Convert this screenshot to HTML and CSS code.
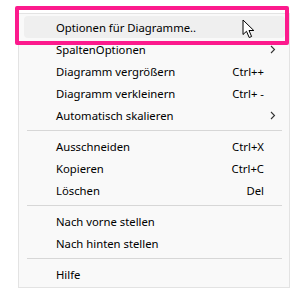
FILE: index.html
```html
<!DOCTYPE html>
<html lang="de">
<head>
<meta charset="UTF-8" />
<title>Kontextmenü</title>
<link rel="stylesheet" href="styles.css">
</head>
<body>
  <div class="menu">
    <div class="item hover"><span class="label">Optionen für Diagramme..</span><span class="key"></span><span class="sub"></span></div>
    <div class="item"><span class="label">SpaltenOptionen</span><span class="key"></span><span class="sub"><svg width="6" height="9" viewBox="0 0 6 9"><path d="M1 1 L4.5 4.5 L1 8" fill="none" stroke="#333" stroke-width="1.1"/></svg></span></div>
    <div class="item"><span class="label">Diagramm vergrößern</span><span class="key">Ctrl++</span><span class="sub"></span></div>
    <div class="item"><span class="label">Diagramm verkleinern</span><span class="key">Ctrl+ -</span><span class="sub"></span></div>
    <div class="item"><span class="label">Automatisch skalieren</span><span class="key"></span><span class="sub"><svg width="6" height="9" viewBox="0 0 6 9"><path d="M1 1 L4.5 4.5 L1 8" fill="none" stroke="#333" stroke-width="1.1"/></svg></span></div>
    <div class="sep"></div>
    <div class="item"><span class="label">Ausschneiden</span><span class="key">Ctrl+X</span><span class="sub"></span></div>
    <div class="item"><span class="label">Kopieren</span><span class="key">Ctrl+C</span><span class="sub"></span></div>
    <div class="item"><span class="label">Löschen</span><span class="key">Del</span><span class="sub"></span></div>
    <div class="sep"></div>
    <div class="item"><span class="label">Nach vorne stellen</span><span class="key"></span><span class="sub"></span></div>
    <div class="item"><span class="label">Nach hinten stellen</span><span class="key"></span><span class="sub"></span></div>
    <div class="sep"></div>
    <div class="item"><span class="label">Hilfe</span><span class="key"></span><span class="sub"></span></div>
  </div>

  <!-- Markierung + Mauszeiger liegen über dem Menü -->
  <div class="highlight"></div>
  <svg class="cursor" width="14" height="20" viewBox="0 0 14 20">
    <path d="M1 1 L1 15.5 L4.5 12.3 L7.2 18.5 L9.6 17.5 L7 11.5 L11.8 11.5 Z" fill="#fff" stroke="#000" stroke-width="1" stroke-linejoin="round"/>
  </svg>
</body>
</html>
```

FILE: styles.css
```css
body {
  margin: 0;
  background: #fff;
  font-family: "Noto Sans", "Liberation Sans", sans-serif;
  font-size: 11.3px;
  color: #000;
  position: relative;
  width: 296px;
  height: 299px;
  overflow: hidden;
}
.menu {
  margin: 13px 0 0 18px;
  width: 261px;
  background: #f9f9f9;
  border: 1px solid #e3e3e3;
  padding: 2px 4px 2px 5px;
}
.item {
  display: flex;
  align-items: center;
  height: 22px;
  padding-left: 32px;
  border-radius: 4px;
}
.item.hover {
  background: #efefef;
}
.label {
  flex: 1;
  white-space: nowrap;
}
.key {
  white-space: nowrap;
}
.sub {
  width: 21px;
  display: flex;
  align-items: center;
  padding-left: 6px;
  box-sizing: border-box;
}
.sep {
  height: 9px;
  display: flex;
  align-items: center;
  padding: 0 3px;
}
.sep::before {
  content: "";
  flex: 1;
  height: 1px;
  background: #d7d7d7;
}
.highlight {
  position: absolute;
  left: 15px;
  top: 6px;
  width: 266px;
  height: 31px;
  border: 4px solid #fc1a8d;
  border-radius: 2px;
}
.cursor {
  position: absolute;
  left: 242px;
  top: 19px;
}
```
